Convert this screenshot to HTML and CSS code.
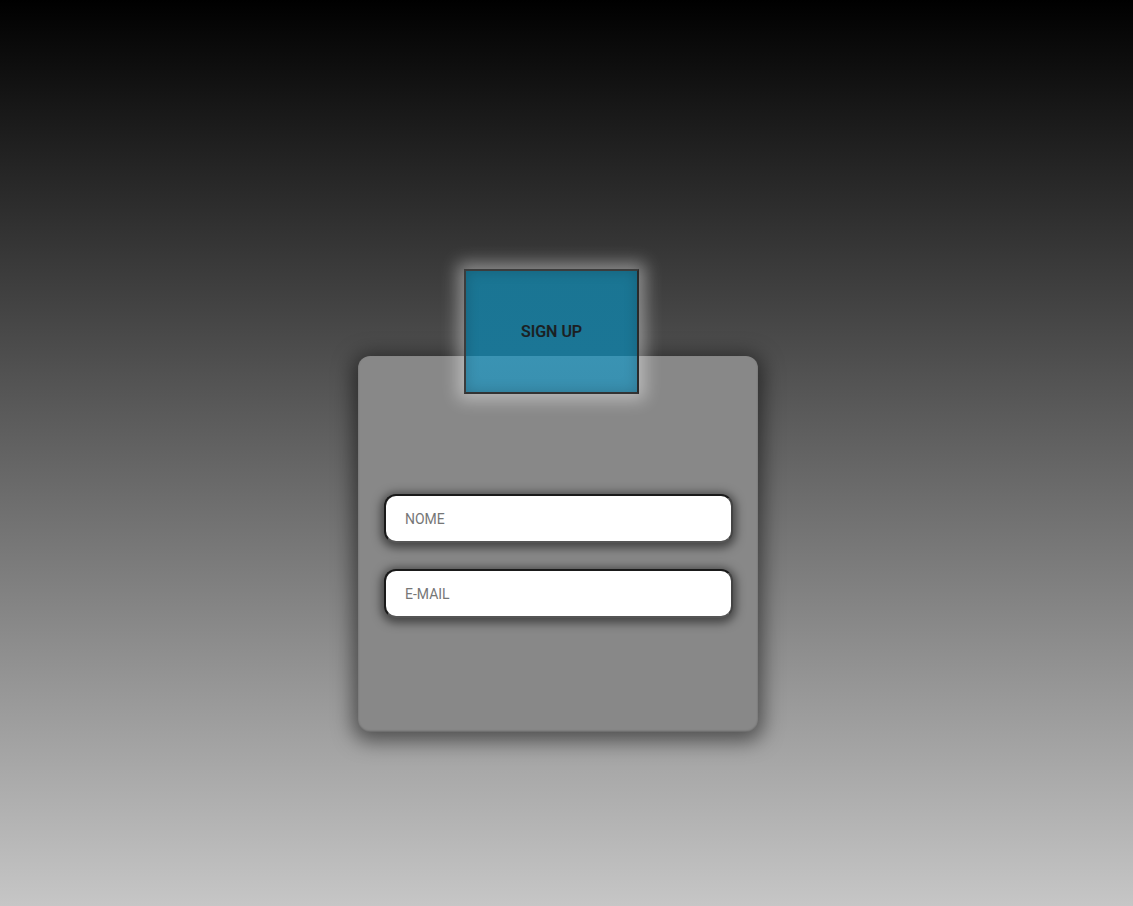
FILE: index.html
```html
<!DOCTYPE html>
<html lang="pt">
<head>
<meta charset="utf-8">
<title>Sign up</title>
<link rel="stylesheet" href="styles.css">
</head>
<body>
<main class="stage">
  <div class="signup">
    <button class="signup-btn" type="button">SIGN UP</button>
    <form class="card">
      <input class="field" type="text" placeholder="NOME">
      <input class="field" type="email" placeholder="E-MAIL">
    </form>
  </div>
</main>
</body>
</html>
```

FILE: styles.css
```css
html, body {
  margin: 0;
  padding: 0;
}

body {
  width: 1133px;
  height: 906px;
  overflow: hidden;
  background: linear-gradient(to bottom, #000000 0%, #c6c6c6 100%);
  font-family: Roboto, "Liberation Sans", sans-serif;
}

.stage {
  display: flex;
  padding-top: 269px;
  padding-left: 358px;
}

.signup {
  display: flex;
  flex-direction: column;
  width: 400px;
}

.signup-btn {
  position: relative;
  z-index: 2;
  box-sizing: border-box;
  width: 175px;
  height: 125px;
  margin-left: 106px;
  margin-bottom: -38px;
  border: 2px solid #3c3c3c;
  border-right-color: #2a2a2a;
  border-bottom-color: #333;
  background: linear-gradient(to bottom, #1a7593 0px, #1b7696 85px, #3a93b3 85px, #3990b0 121px);
  box-shadow: 0 0 16px 6px rgba(255, 255, 255, 0.42), inset 0 0 14px rgba(0, 0, 0, 0.18);
  font-family: Roboto, "Liberation Sans", sans-serif;
  font-size: 16px;
  font-weight: 500;
  -webkit-text-stroke: 0.2px #1b1f22;
  color: #1b1f22;
  padding: 0;
  cursor: pointer;
}

.card {
  position: relative;
  z-index: 1;
  box-sizing: border-box;
  width: 400px;
  height: 376px;
  margin: 0;
  padding: 138px 25px 0 26px;
  display: flex;
  flex-direction: column;
  gap: 26px;
  background: #888888;
  border-radius: 12px;
  box-shadow: 0 4px 20px 5px rgba(0, 0, 0, 0.5), inset 0 -1px 2px rgba(0, 0, 0, 0.25);
}

.field {
  box-sizing: border-box;
  width: 349px;
  height: 49px;
  padding: 0 0 0 19px;
  border: 2px solid #1a1a1a;
  border-bottom-color: #555;
  border-right-color: #444;
  border-radius: 12px;
  background: #ffffff;
  box-shadow: 0 2px 10px 3px rgba(0, 0, 0, 0.5);
  font-family: Roboto, "Liberation Sans", sans-serif;
  font-size: 14px;
  color: #333;
  outline: none;
}

.field::placeholder {
  color: #767676;
}
```
